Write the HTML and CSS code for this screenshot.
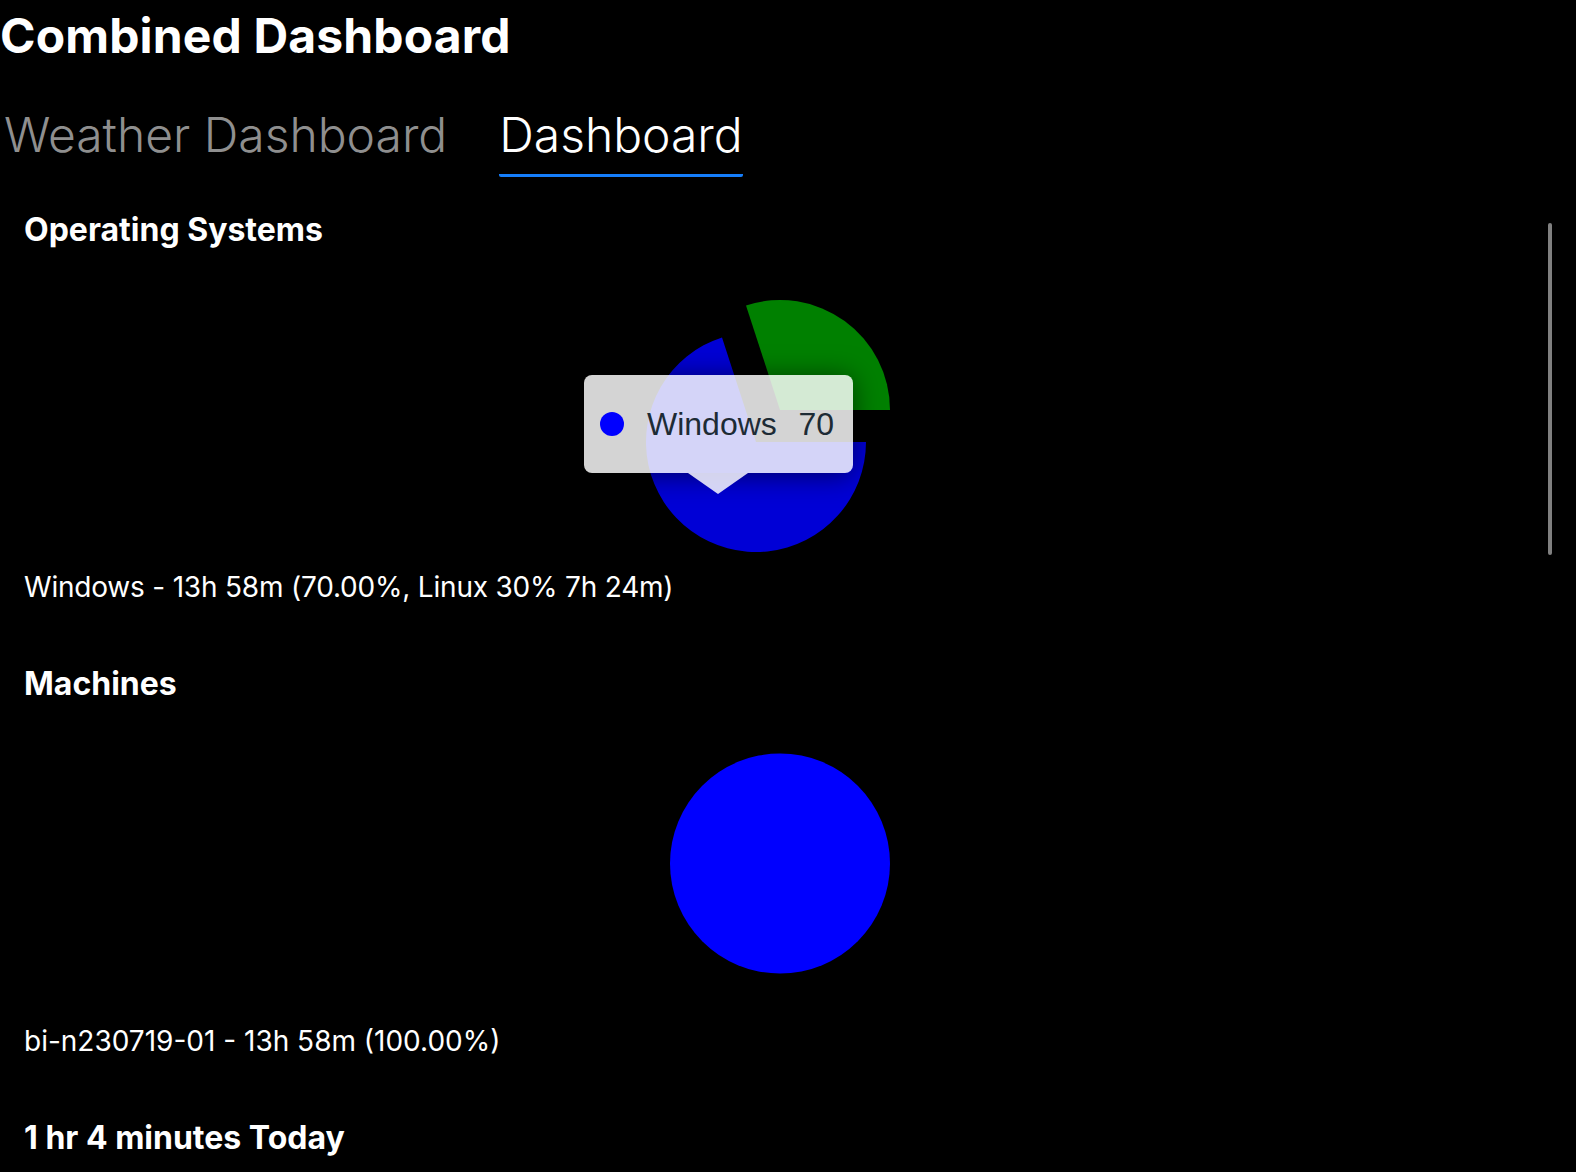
FILE: index.html
```html
<!DOCTYPE html>
<html lang="en">
<head>
<meta charset="utf-8">
<title>Combined Dashboard</title>
<link rel="stylesheet" href="styles.css">
</head>
<body>
<h1 class="title">Combined Dashboard</h1>
<nav class="tabs">
  <div class="tab">Weather Dashboard</div>
  <div class="tab tab-active">Dashboard</div>
</nav>
<main class="content">
  <div class="scroll-thumb"></div>
  <section class="panel">
    <h2 class="panel-title">Operating Systems</h2>
    <div class="chart">
      <svg class="chart-svg" width="1512" height="319" viewBox="0 0 1512 319">
        <path d="M732,192 L842,192 A110,110 0 1 1 698,87.4 Z" fill="#0000d6"/>
        <path d="M756,160 L722,55.4 A110,110 0 0 1 866,160 Z" fill="#008000"/>
      </svg>
      <div class="tooltip">
        <span class="tooltip-dot"></span>
        <span class="tooltip-name">Windows</span>
        <span class="tooltip-value">70</span>
      </div>
    </div>
    <p class="caption caption-tight">Windows - 13h 58m (70.00%, Linux 30% 7h 24m)</p>
  </section>
  <section class="panel">
    <h2 class="panel-title">Machines</h2>
    <div class="chart">
      <svg class="chart-svg" width="1512" height="319" viewBox="0 0 1512 319">
        <circle cx="756" cy="159.5" r="110" fill="#0000ff"/>
      </svg>
    </div>
    <p class="caption">bi-n230719-01 - 13h 58m (100.00%)</p>
  </section>
  <section class="panel">
    <h2 class="panel-title">1 hr 4 minutes Today</h2>
  </section>
</main>
</body>
</html>
```
FILE: styles.css
```css
html, body {
  margin: 0;
  padding: 0;
  background: #000;
}
body {
  font-family: Inter, "Noto Sans", sans-serif;
  color: #fff;
  width: 1576px;
  height: 1172px;
  overflow: hidden;
}
.title {
  margin: 8px 0 0 0;
  font-size: 48px;
  line-height: 56px;
  font-weight: 700;
  letter-spacing: 0.15px;
}
.tabs {
  display: flex;
  gap: 52px;
  margin-top: 43px;
  padding-left: 4px;
}
.tab {
  font-size: 48px;
  line-height: 56px;
  font-weight: 300;
  color: #8f8f8f;
  padding-bottom: 11px;
  border-bottom: 3px solid transparent;
}
.tab-active {
  color: #fff;
  border-bottom-color: #157efb;
  border-radius: 0 0 2px 2px;
}
.content {
  position: relative;
  padding: 33px 0 0 24px;
  width: 1512px;
}
.scroll-thumb {
  position: absolute;
  left: 1548px;
  top: 46px;
  width: 4px;
  height: 332px;
  background: #808080;
  border-radius: 2px;
}
.panel + .panel {
  margin-top: 59px;
}
.panel-title {
  margin: 0;
  font-size: 32px;
  line-height: 40px;
  font-weight: 700;
}
.chart {
  position: relative;
  height: 319px;
}
.chart-svg {
  display: block;
}
.caption {
  margin: 0;
  font-size: 28px;
  line-height: 36px;
  font-weight: 400;
}
.caption-tight {
  letter-spacing: -0.2px;
}
.tooltip {
  position: absolute;
  left: 560px;
  top: 125px;
  width: 269px;
  height: 98px;
  box-sizing: border-box;
  padding: 0 19px 0 16px;
  display: flex;
  align-items: center;
  background: rgba(255, 255, 255, 0.83);
  border-radius: 8px;
  box-shadow: 0 2px 28px rgba(0, 0, 0, 0.55);
  font-family: "Liberation Sans", Arial, sans-serif;
  font-size: 32px;
  color: #1d2b35;
}
.tooltip::after {
  content: "";
  position: absolute;
  left: 104px;
  top: 98px;
  width: 60px;
  height: 21px;
  background: rgba(255, 255, 255, 0.83);
  clip-path: polygon(0 0, 100% 0, 50% 100%);
}
.tooltip-dot {
  width: 24px;
  height: 24px;
  border-radius: 50%;
  background: #0000ff;
  margin-right: 23px;
  flex: none;
}
.tooltip-name {
  flex: 1;
}
.tooltip-value {
  flex: none;
}
```
